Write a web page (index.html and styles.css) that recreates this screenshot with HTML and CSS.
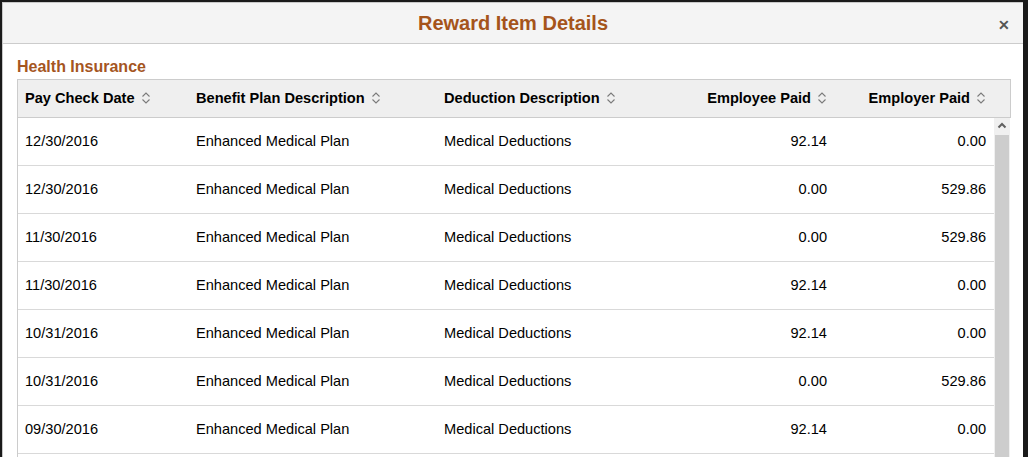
FILE: index.html
```html
<!DOCTYPE html>
<html lang="en">
  <head>
    <meta charset="UTF-8" />
    <title>Reward Item Details</title>
    <link rel="stylesheet" href="styles.css">
  </head>
  <body>
    <div class="modal">
      <div class="modal-header">
        <span></span>
        <h1>Reward Item Details</h1>
        <button class="close">&#x2715;</button>
      </div>
      <div class="modal-body">
        <h2>Health Insurance</h2>
        <div class="grid">
          <div class="grid-head">
            <div class="th">Pay Check Date <svg class="sort" viewBox="0 0 10 14"><polyline points="1.5,5.5 5,2 8.5,5.5" /><polyline points="1.5,8.5 5,12 8.5,8.5" /></svg></div>
            <div class="th">Benefit Plan Description <svg class="sort" viewBox="0 0 10 14"><polyline points="1.5,5.5 5,2 8.5,5.5" /><polyline points="1.5,8.5 5,12 8.5,8.5" /></svg></div>
            <div class="th">Deduction Description <svg class="sort" viewBox="0 0 10 14"><polyline points="1.5,5.5 5,2 8.5,5.5" /><polyline points="1.5,8.5 5,12 8.5,8.5" /></svg></div>
            <div class="th num">Employee Paid <svg class="sort" viewBox="0 0 10 14"><polyline points="1.5,5.5 5,2 8.5,5.5" /><polyline points="1.5,8.5 5,12 8.5,8.5" /></svg></div>
            <div class="th num">Employer Paid <svg class="sort" viewBox="0 0 10 14"><polyline points="1.5,5.5 5,2 8.5,5.5" /><polyline points="1.5,8.5 5,12 8.5,8.5" /></svg></div>
          </div>
          <div class="grid-scroll">
            <div class="rows">
              <div class="row"><div>12/30/2016</div><div>Enhanced Medical Plan</div><div>Medical Deductions</div><div class="num">92.14</div><div class="num">0.00</div></div>
              <div class="row"><div>12/30/2016</div><div>Enhanced Medical Plan</div><div>Medical Deductions</div><div class="num">0.00</div><div class="num">529.86</div></div>
              <div class="row"><div>11/30/2016</div><div>Enhanced Medical Plan</div><div>Medical Deductions</div><div class="num">0.00</div><div class="num">529.86</div></div>
              <div class="row"><div>11/30/2016</div><div>Enhanced Medical Plan</div><div>Medical Deductions</div><div class="num">92.14</div><div class="num">0.00</div></div>
              <div class="row"><div>10/31/2016</div><div>Enhanced Medical Plan</div><div>Medical Deductions</div><div class="num">92.14</div><div class="num">0.00</div></div>
              <div class="row"><div>10/31/2016</div><div>Enhanced Medical Plan</div><div>Medical Deductions</div><div class="num">0.00</div><div class="num">529.86</div></div>
              <div class="row"><div>09/30/2016</div><div>Enhanced Medical Plan</div><div>Medical Deductions</div><div class="num">92.14</div><div class="num">0.00</div></div>
            </div>
            <div class="scrollbar">
              <div class="scroll-up"><svg viewBox="0 0 16 16"><polyline points="4.5,9.5 8,6 11.5,9.5" /></svg></div>
              <div class="scroll-thumb"></div>
            </div>
          </div>
        </div>
      </div>
    </div>
  </body>
</html>
```

FILE: styles.css
```css
* {
  margin: 0;
  padding: 0;
  box-sizing: border-box;
  font-family: "Liberation Sans", Arial, sans-serif;
}

html, body {
  height: 100%;
  overflow: hidden;
}

body {
  background: #1a1a1a;
  padding: 2px 5px 0 2px;
}

.modal {
  background: #ffffff;
  height: 100%;
  overflow: hidden;
  border-left: 1px solid #c8c8c8;
  border-top: 1px solid #c8c8c8;
}

.modal-header {
  display: grid;
  grid-template-columns: 1fr auto 1fr;
  align-items: center;
  height: 41px;
  background: #f4f4f4;
  border-bottom: 1px solid #cccccc;
}

.modal-header h1 {
  font-size: 20px;
  font-weight: bold;
  color: #a5541b;
  line-height: 24px;
  padding-bottom: 1px;
}

.close {
  justify-self: end;
  margin-right: 12px;
  margin-top: 3px;
  border: none;
  background: transparent;
  color: #555555;
  font-size: 14px;
  font-weight: bold;
  width: 14px;
  height: 14px;
  line-height: 14px;
}

.modal-body {
  padding: 13px 12px 0 14px;
}

.modal-body h2 {
  font-size: 16px;
  font-weight: bold;
  color: #a5561f;
  line-height: 20px;
  margin-bottom: 2px;
}

.grid {
  border-left: 1px solid #cccccc;
}

.grid-head,
.row {
  display: grid;
  grid-template-columns: 170px 248px 239px 160px 159px;
}

.grid-head {
  height: 39px;
  background: #efefef;
  border-top: 1px solid #cccccc;
  border-bottom: 1px solid #cccccc;
  border-right: 1px solid #cccccc;
  padding-right: 15px;
  padding-bottom: 2px;
}

.th {
  display: flex;
  align-items: center;
  gap: 6px;
  padding: 0 8px;
  font-size: 14.6px;
  font-weight: bold;
  color: #000000;
}

.th:first-child {
  padding-left: 7px;
}

.th.num {
  justify-content: flex-end;
}

.sort {
  width: 10px;
  height: 14px;
  fill: none;
  stroke: #7a7a7a;
  stroke-width: 1.1;
}

.grid-scroll {
  display: flex;
  height: 345px;
}

.rows {
  width: 976px;
}

.row {
  height: 48px;
  border-bottom: 1px solid #d9d9d9;
  align-items: center;
  padding-bottom: 2px;
  font-size: 14.6px;
  color: #000000;
}

.row div {
  padding: 0 8px;
}

.row div:first-child {
  padding-left: 7px;
}

.row .num {
  text-align: right;
}

.scrollbar {
  width: 16px;
  display: flex;
  flex-direction: column;
  background: #f0f0f0;
}

.scroll-up {
  height: 17px;
}

.scroll-up svg {
  width: 16px;
  height: 16px;
  fill: none;
  stroke: #606060;
  stroke-width: 2;
}

.scroll-thumb {
  flex: 1;
  background: #cdcdcd;
  margin: 0 1px;
}
```
